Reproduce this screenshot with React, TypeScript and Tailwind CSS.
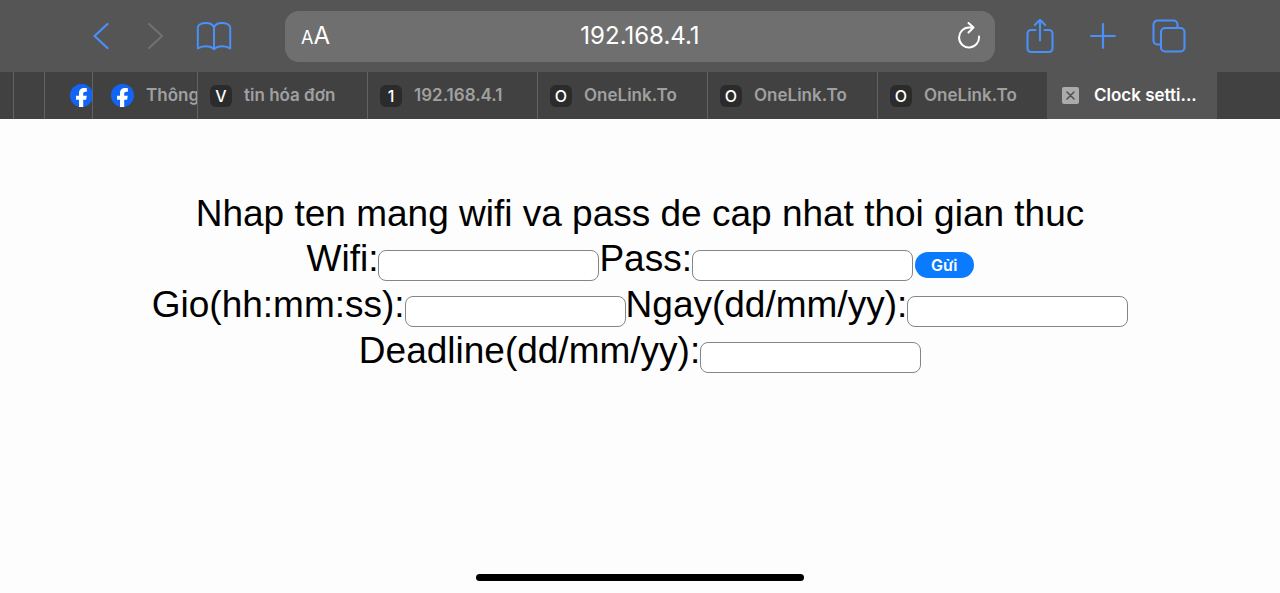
import type { ReactNode } from 'react'

type Tab = {
  id: string
  title: string
  letter: string
}

const tabs: Tab[] = [
  { id: 'invoice', title: 'tin hóa đơn', letter: 'V' },
  { id: 'router', title: '192.168.4.1', letter: '1' },
  { id: 'onelink-1', title: 'OneLink.To', letter: 'O' },
  { id: 'onelink-2', title: 'OneLink.To', letter: 'O' },
  { id: 'onelink-3', title: 'OneLink.To', letter: 'O' },
]

const tabClass =
  'flex h-full shrink-0 items-center overflow-hidden whitespace-nowrap border-l border-[#626262] text-left'

const inputClass =
  'h-[31px] w-[221px] rounded-lg border border-[#858585] bg-white px-2 align-middle text-lg focus:outline-none focus:ring-2 focus:ring-blue-500'

function ToolbarButton({ label, disabled, children }: { label: string; disabled?: boolean; children: ReactNode }) {
  return (
    <button
      type="button"
      aria-label={label}
      disabled={disabled}
      className="shrink-0 text-[#4a90fa] disabled:text-[#717171]"
    >
      {children}
    </button>
  )
}

function FacebookIcon() {
  return (
    <svg width="23" height="23" viewBox="0 0 24 24" className="shrink-0" aria-hidden="true">
      <circle cx="12" cy="12" r="12" fill="#1264f5" />
      <path
        d="M9.400 24v-7.600H6.300v-4.200h3.100V9.800c0-3.700 2.100-5.600 5.500-5.600 1.400 0 2.700.2 2.700.2v3.600h-1.700c-1.500 0-2.100.8-2.100 2v2.200h3.700l-.7 4.200h-3V24z"
        fill="#fff"
      />
    </svg>
  )
}

function Toolbar() {
  return (
    <header className="flex h-[72px] items-center bg-[#555555] pr-[94px] pl-[92px]">
      <nav className="flex shrink-0 items-center">
        <ToolbarButton label="Back">
          <svg width="17" height="28" viewBox="0 0 17 28" fill="none" stroke="currentColor" strokeWidth="2.2" strokeLinecap="round" strokeLinejoin="round">
            <path d="M15.5 2 2.5 14l13 12" />
          </svg>
        </ToolbarButton>
        <div className="ml-[38px] flex">
          <ToolbarButton label="Forward" disabled>
            <svg width="17" height="28" viewBox="0 0 17 28" fill="none" stroke="currentColor" strokeWidth="2.2" strokeLinecap="round" strokeLinejoin="round">
              <path d="m2 2 13 12L2 26" />
            </svg>
          </ToolbarButton>
        </div>
        <div className="ml-8 flex">
          <ToolbarButton label="Bookmarks">
            <svg width="36" height="30" viewBox="0 0 36 30" fill="none" stroke="currentColor" strokeWidth="2" strokeLinecap="round" strokeLinejoin="round">
              <path d="M18 6.500C17 3.500 13.800 2 10 2S2.800 3.500 1.800 6v21.500c2-1.600 5-2.300 8-2.300 3.300 0 6.200 1 8.200 3 2-2 4.900-3 8.200-3 3 0 6 .7 8 2.300V6c-1-2.500-4.400-4-8.200-4S19 3.500 18 6.500zM18 6.500V28" />
            </svg>
          </ToolbarButton>
        </div>
      </nav>

      <div className="mr-[31px] ml-[53px] flex h-[51px] min-w-0 flex-1 items-center rounded-[14px] bg-[#6f6f6f] pr-3 pl-4 text-white">
        <button type="button" aria-label="Page settings" className="flex w-10 items-baseline">
          <span className="text-lg">A</span>
          <span className="text-2xl">A</span>
        </button>
        <input
          type="text"
          aria-label="Address"
          defaultValue="192.168.4.1"
          className="min-w-0 flex-1 bg-transparent text-center text-2xl focus:outline-none"
        />
        <button type="button" aria-label="Reload" className="flex w-11 justify-end">
          <svg width="28" height="28" viewBox="0 0 28 28" fill="none" stroke="currentColor" strokeWidth="2" strokeLinecap="round" strokeLinejoin="round">
            <path d="M24 14.500A10 10 0 1 1 14 5.500h4.500M13.500 1l5 4.500-5 5" />
          </svg>
        </button>
      </div>

      <div className="flex shrink-0 items-center gap-9">
        <ToolbarButton label="Share">
          <svg width="28" height="36" viewBox="0 0 28 36" fill="none" stroke="currentColor" strokeWidth="2.1" strokeLinecap="round" strokeLinejoin="round">
            <path d="M9.500 12H5a3.500 3.500 0 0 0-3.500 3.500v15A3.500 3.500 0 0 0 5 34h18a3.500 3.500 0 0 0 3.500-3.500v-15A3.500 3.500 0 0 0 23 12h-4.500M14 22.500V2M8.800 7 14 1.800 19.200 7" />
          </svg>
        </ToolbarButton>
        <ToolbarButton label="New tab">
          <svg width="26" height="26" viewBox="0 0 26 26" fill="none" stroke="currentColor" strokeWidth="2.2" strokeLinecap="round">
            <path d="M13 1.200v23.600M1.200 13h23.600" />
          </svg>
        </ToolbarButton>
        <ToolbarButton label="Show tabs">
          <svg width="34" height="34" viewBox="0 0 34 34" fill="none" stroke="currentColor" strokeWidth="2.1" strokeLinecap="round" strokeLinejoin="round">
            <rect x="9" y="9" width="23.5" height="23.5" rx="4" />
            <path d="M9 25.500H5.500a4 4 0 0 1-4-4v-16a4 4 0 0 1 4-4h16a4 4 0 0 1 4 4V9" />
          </svg>
        </ToolbarButton>
      </div>
    </header>
  )
}

function TabBar() {
  return (
    <div className="flex h-[47px] overflow-hidden bg-[#414141] text-[17px] font-semibold text-[#a0a0a0]">
      <div className="w-[13px] shrink-0" />
      <button type="button" aria-label="Collapsed tab" className={`${tabClass} w-[31px]`} />
      <button type="button" aria-label="Facebook" className={`${tabClass} w-12 pl-[25px]`}>
        <FacebookIcon />
      </button>
      <button type="button" className={`${tabClass} w-[105px] gap-3 pl-[18px]`}>
        <FacebookIcon />
        <span>Thông</span>
      </button>
      {tabs.map((tab) => (
        <button key={tab.id} type="button" className={`${tabClass} w-[170px] gap-3 pl-3`}>
          <span className="flex size-[22px] shrink-0 items-center justify-center rounded-md bg-[#2b2b2b] text-base font-medium text-white">
            {tab.letter}
          </span>
          <span>{tab.title}</span>
        </button>
      ))}
      <div className="flex w-[170px] shrink-0 items-center gap-[15px] bg-[#555555] pl-[15px] text-white">
        <button
          type="button"
          aria-label="Close tab"
          className="flex size-[17px] items-center justify-center rounded-xs bg-[#ababab] text-[#505050]"
        >
          <svg width="9" height="9" viewBox="0 0 9 9" fill="none" stroke="currentColor" strokeWidth="1.5" strokeLinecap="round">
            <path d="m1 1 7 7M8 1 1 8" />
          </svg>
        </button>
        <span>Clock setti...</span>
      </div>
    </div>
  )
}

function Field({ id, label, type = 'text' }: { id: string; label: string; type?: string }) {
  return (
    <div className="flex items-center">
      <label htmlFor={id}>{label}</label>
      <input id={id} name={id} type={type} className={`${inputClass} mt-3`} />
    </div>
  )
}

export default function App() {
  return (
    <div className="flex min-h-screen flex-col bg-[#fdfdfd] font-['Inter',sans-serif]">
      <Toolbar />
      <TabBar />

      <main className="flex-1 pt-[72px] font-['Liberation_Sans',Arial,sans-serif] text-[37px] leading-[46px] text-black">
        <h1 className="text-center leading-[45px]">Nhap ten mang wifi va pass de cap nhat thoi gian thuc</h1>
        <form onSubmit={(e) => e.preventDefault()}>
          <div className="flex flex-wrap items-center justify-center">
            <Field id="wifi" label="Wifi:" />
            <Field id="pass" label="Pass:" />
            <button
              type="submit"
              className="mt-3 ml-0.5 h-[26px] rounded-full bg-[#0a7aff] px-4 font-['Inter',sans-serif] text-base leading-5 font-semibold text-white"
            >
              Gửi
            </button>
          </div>
          <div className="flex flex-wrap items-center justify-center">
            <Field id="time" label="Gio(hh:mm:ss):" />
            <Field id="date" label="Ngay(dd/mm/yy):" />
          </div>
          <div className="flex flex-wrap items-center justify-center">
            <Field id="deadline" label="Deadline(dd/mm/yy):" />
          </div>
        </form>
      </main>

      <div className="mx-auto mb-3 h-[7px] w-[328px] rounded-full bg-black" />
    </div>
  )
}
